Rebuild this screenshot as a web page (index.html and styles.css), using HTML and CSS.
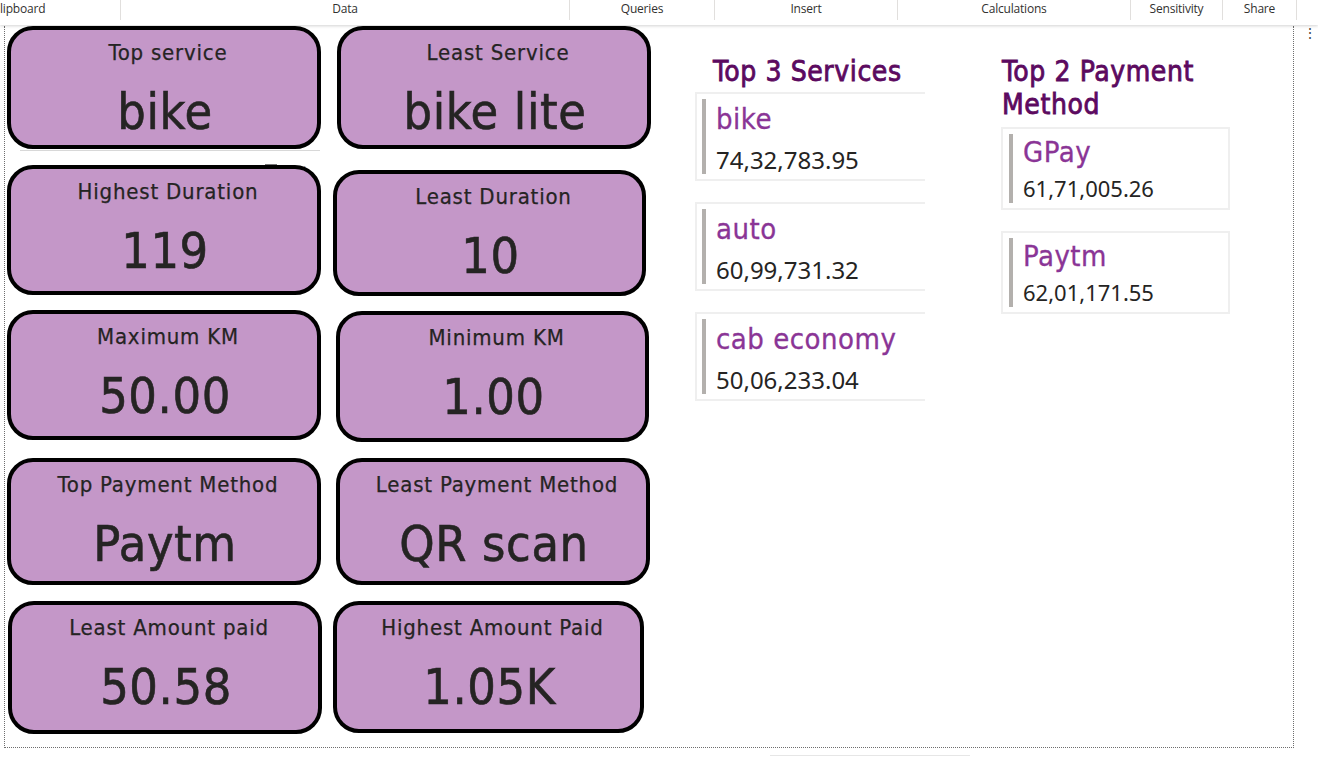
FILE: index.html
```html
<!DOCTYPE html>
<html lang="en">
<head>
<meta charset="utf-8">
<title>Report</title>
<link rel="stylesheet" href="styles.css">
</head>
<body>
<header class="ribbon">
  <div class="rb-sec rb-clip">lipboard</div>
  <div class="rb-sec rb-data">Data</div>
  <div class="rb-sec rb-queries">Queries</div>
  <div class="rb-sec rb-insert">Insert</div>
  <div class="rb-sec rb-calc">Calculations</div>
  <div class="rb-sec rb-sens">Sensitivity</div>
  <div class="rb-sec rb-share">Share</div>
</header>
<div class="more-dots">⋮</div>
<main class="canvas">
  <section class="cards">
    <div class="row row1">
      <div class="card c1a"><div class="ttl">Top service</div><div class="val">bike</div></div>
      <div class="card c1b"><div class="ttl">Least Service</div><div class="val">bike lite</div></div>
      <div class="vis-line"></div>
      <div class="vis-head"><span class="vh-focus"></span><span class="vh-more">•••</span></div>
    </div>
    <div class="row row2">
      <div class="card c2a"><div class="ttl">Highest Duration</div><div class="val">119</div></div>
      <div class="card c2b"><div class="ttl">Least Duration</div><div class="val">10</div></div>
    </div>
    <div class="row row3">
      <div class="card c3a"><div class="ttl">Maximum KM</div><div class="val">50.00</div></div>
      <div class="card c3b"><div class="ttl">Minimum KM</div><div class="val">1.00</div></div>
    </div>
    <div class="row row4">
      <div class="card c4a"><div class="ttl">Top Payment Method</div><div class="val">Paytm</div></div>
      <div class="card c4b"><div class="ttl">Least Payment Method</div><div class="val">QR scan</div></div>
    </div>
    <div class="row row5">
      <div class="card c5a"><div class="ttl">Least Amount paid</div><div class="val">50.58</div></div>
      <div class="card c5b"><div class="ttl">Highest Amount Paid</div><div class="val">1.05K</div></div>
    </div>
  </section>

  <section class="services">
    <h2 class="heading svc-heading">Top 3 Services</h2>
    <div class="svc-list">
      <div class="mrow svc-row"><div class="bar"></div><div class="mtext"><div class="mname">bike</div><div class="mval svc-val">74,32,783.95</div></div></div>
      <div class="mrow svc-row"><div class="bar"></div><div class="mtext"><div class="mname">auto</div><div class="mval svc-val">60,99,731.32</div></div></div>
      <div class="mrow svc-row"><div class="bar"></div><div class="mtext"><div class="mname">cab economy</div><div class="mval svc-val">50,06,233.04</div></div></div>
    </div>
  </section>

  <section class="payments">
    <h2 class="heading pay-heading">Top 2 Payment<br>Method</h2>
    <div class="pay-list">
      <div class="mrow pay-row"><div class="bar"></div><div class="mtext"><div class="mname">GPay</div><div class="mval pay-val">61,71,005.26</div></div></div>
      <div class="mrow pay-row"><div class="bar"></div><div class="mtext"><div class="mname">Paytm</div><div class="mval pay-val">62,01,171.55</div></div></div>
    </div>
  </section>
</main>
<div class="bottom-line"></div>
</body>
</html>
```

FILE: styles.css
```css
* { box-sizing: border-box; }
html, body { margin: 0; padding: 0; background: #ffffff; }
body {
  width: 1318px;
  height: 757px;
  overflow: hidden;
  position: relative;
  font-family: "Open Sans", "Noto Sans", sans-serif;
}

/* ribbon */
.ribbon {
  height: 25px;
  display: flex;
  background: #ffffff;
  box-shadow: 0 1px 3px rgba(0,0,0,0.18);
  position: relative;
  z-index: 2;
  font-family: "Open Sans", "Noto Sans", sans-serif;
  font-size: 12px;
  color: #323130;
  letter-spacing: -0.2px;
}
.rb-sec {
  height: 20px;
  line-height: 17px;
  text-align: center;
  border-right: 1px solid #e1dfdd;
  white-space: nowrap;
}
.rb-clip { width: 121px; text-align: left; }
.rb-data { width: 449px; }
.rb-queries { width: 145px; }
.rb-insert { width: 183px; }
.rb-calc { width: 233px; }
.rb-sens { width: 92px; }
.rb-share { width: 74px; }

.more-dots {
  position: absolute;
  left: 1303px;
  top: 26px;
  font-size: 14px;
  line-height: 14px;
  color: #444;
}

/* canvas */
.canvas {
  margin-top: 1px;
  margin-left: 4px;
  width: 1290px;
  height: 722px;
  border-left: 1px dotted #6e6e6e;
  border-right: 1px dotted #6e6e6e;
  border-bottom: 1px dotted #6e6e6e;
  display: flex;
  align-items: flex-start;
}

.cards {
  width: 647px;
  padding-left: 2px;
  display: flex;
  flex-direction: column;
  flex-shrink: 0;
}
.row { display: flex; align-items: flex-start; position: relative; }
.row1 { gap: 16px; }
.row2 { gap: 12px; margin-top: 16px; }
.row3 { gap: 15px; margin-top: 14px; }
.row4 { gap: 15px; margin-top: 16px; }
.row5 { gap: 11px; margin-top: 16px; }

.card {
  width: 314px;
  border: 4px solid #000000;
  border-radius: 26px;
  background: #c497c8;
  display: flex;
  flex-direction: column;
  align-items: center;
  padding-top: 10px;
  color: #252423;
  font-family: "DejaVu Sans Condensed", "DejaVu Sans", sans-serif;
  font-stretch: condensed;
}
.c1a, .c1b { height: 123px; }
.c2a { height: 130px; }
.c2b { height: 126px; width: 313px; margin-top: 5px; }
.c3a { height: 130px; }
.c3b { height: 131px; width: 313px; margin-top: 1px; }
.c4a, .c4b { height: 127px; }
.c5a { height: 133px; margin-left: 1px; }
.c5b { height: 132px; width: 311px; }

.ttl {
  font-size: 22px;
  line-height: 26px;
  letter-spacing: 0.8px;
  margin-left: 8px;
  -webkit-text-stroke: 0.25px #252423;
}
.val {
  margin-top: 18px;
  font-size: 50px;
  line-height: 56px;
  letter-spacing: 0.6px;
  margin-left: 2px;
  -webkit-text-stroke: 0.6px #252423;
}

.vis-line {
  position: absolute;
  left: 13px;
  top: 124px;
  width: 300px;
  height: 1px;
  background: #d8d8d8;
}
.vis-head {
  position: absolute;
  left: 258px;
  top: 128px;
  display: flex;
  align-items: center;
  gap: 20px;
}
.vh-focus { width: 12px; height: 1px; background: #777; margin-top: 3px; }
.vh-more { font-size: 6px; color: #999; letter-spacing: 1px; margin-top: 9px; }

/* visual lists */
.services {
  width: 230px;
  margin-left: 43px;
  flex-shrink: 0;
  overflow: hidden;
}
.payments {
  width: 230px;
  margin-left: 76px;
  flex-shrink: 0;
}
.heading {
  margin: 0;
  font-family: "DejaVu Sans Condensed", "DejaVu Sans", sans-serif;
  font-stretch: condensed;
  font-weight: 400;
  font-size: 28px;
  line-height: 33px;
  letter-spacing: 0.6px;
  color: #5c0a5f;
  -webkit-text-stroke: 0.8px #5c0a5f;
  padding-top: 29px;
}
.svc-heading { padding-left: 18px; }
.pay-heading { padding-left: 1px; }

.svc-list, .pay-list {
  display: flex;
  flex-direction: column;
  gap: 21px;
}
.svc-list { margin-top: 4px; }
.pay-list { margin-top: 6px; }

.mrow {
  display: flex;
  border: 2px solid #efefef;
  padding: 5px 0 5px 5px;
}
.svc-row { height: 89px; width: 240px; border-right: none; }
.pay-row { height: 83px; width: 229px; padding-left: 6px; }
.bar { width: 4px; background: #b3b0ad; flex-shrink: 0; }
.mtext { padding-left: 10px; }
.mname {
  font-family: "DejaVu Sans Condensed", "DejaVu Sans", sans-serif;
  font-stretch: condensed;
  color: #8a3596;
  font-size: 29px;
  line-height: 34px;
  letter-spacing: 0.5px;
  -webkit-text-stroke: 0.3px #8a3596;
}
.svc-row .mname { margin-top: 3px; }
.pay-row .mname { margin-top: 1px; }
.mval {
  font-family: "Noto Sans", "Open Sans", sans-serif;
  color: #252423;
}
.svc-val { font-size: 24px; line-height: 32px; margin-top: 8px; }
.pay-val { font-size: 22px; line-height: 30px; margin-top: 4px; }

.bottom-line {
  position: absolute;
  left: 770px;
  top: 755px;
  width: 200px;
  height: 1px;
  background: #e6e6e6;
}
```
